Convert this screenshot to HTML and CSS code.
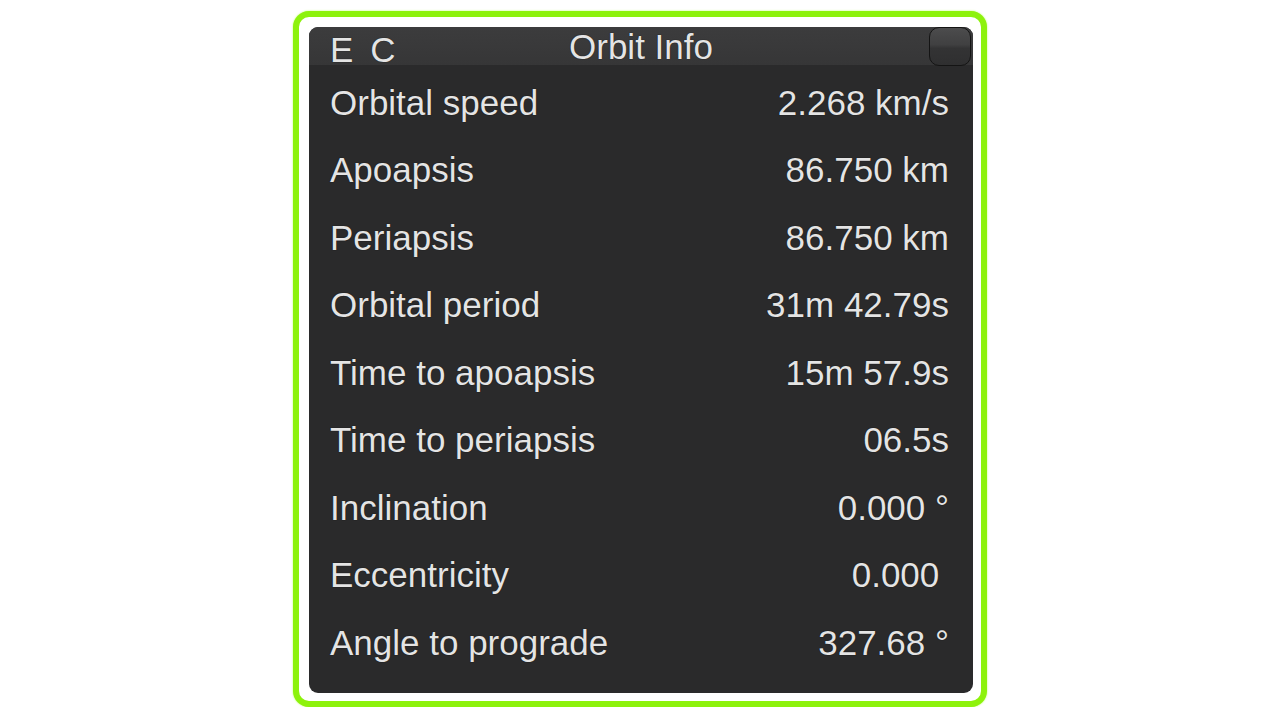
FILE: index.html
```html
<!DOCTYPE html>
<html lang="en">
<head>
  <meta charset="UTF-8">
  <meta name="viewport" content="width=device-width, initial-scale=1.0">
  <title>Orbit Info</title>
  <link rel="stylesheet" href="styles.css">
</head>
<body>
  <div class="frame">
    <div class="panel">
      <div class="titlebar">
        <div class="title-left"><span>E</span><span>C</span></div>
        <div class="title">Orbit Info</div>
        <div class="close"></div>
      </div>
      <div class="rows">
        <div class="row"><span>Orbital speed</span><span>2.268 km/s</span></div>
        <div class="row"><span>Apoapsis</span><span>86.750 km</span></div>
        <div class="row"><span>Periapsis</span><span>86.750 km</span></div>
        <div class="row"><span>Orbital period</span><span>31m 42.79s</span></div>
        <div class="row"><span>Time to apoapsis</span><span>15m 57.9s</span></div>
        <div class="row"><span>Time to periapsis</span><span>06.5s</span></div>
        <div class="row"><span>Inclination</span><span>0.000 °</span></div>
        <div class="row"><span>Eccentricity</span><span>0.000&nbsp;</span></div>
        <div class="row"><span>Angle to prograde</span><span>327.68 °</span></div>
      </div>
    </div>
  </div>
</body>
</html>
```

FILE: styles.css
```css
body { margin: 0; background: #fff; font-family: "Liberation Sans", Arial, sans-serif; }
.frame { width: 664px; margin: 11px auto 0; border: 6px solid #8df20c; border-radius: 16px; padding: 10px 8px 8px 10px; box-shadow: 0 0 2px #b6ff5a; background: #fff; }
.panel { width: 664px; height: 666px; background: #2a2a2b; border-radius: 9px; overflow: hidden; color: #e4e4e4; font-size: 35px; text-shadow: 0 0 1px #000; }
.titlebar { height: 38px; display: grid; grid-template-columns: 1fr auto 1fr; align-items: start; background: linear-gradient(#3c3c3d, #363637); }
.title-left { display: flex; gap: 17px; padding: 4px 0 0 21px; line-height: 38px; }
.title { line-height: 38px; padding-top: 1px; }
.close { justify-self: end; width: 40px; height: 37px; margin: 0 2px 0 0; border: 1.5px solid #141414; border-radius: 10px; background: linear-gradient(#4c4c4d, #404041 45%, #333334 55%, #2f2f30); }
.rows { padding: 4px 24px 0 21px; }
.row { height: 67.5px; display: flex; justify-content: space-between; align-items: center; white-space: pre; }
```
